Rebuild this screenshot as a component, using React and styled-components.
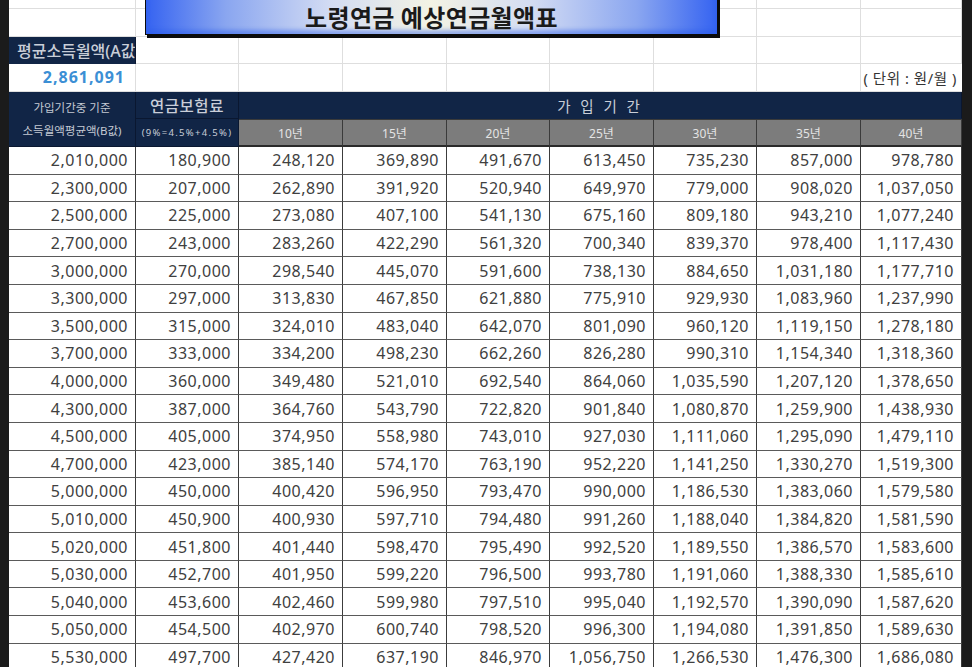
import React from "react";
import styled, { createGlobalStyle } from "styled-components";

const Global = createGlobalStyle`
  html, body { margin: 0; padding: 0; background: #1b1b1b; overflow: hidden; }
  #root { width: 972px; height: 667px; }
`;

const NAVY = "#112546";
const FONT = `"Noto Sans", "Noto Sans CJK KR", sans-serif`;

const Frame = styled.div`
  display: flex;
  width: 972px;
  height: 667px;
  overflow: hidden;
  background: #1b1b1b;
  font-family: ${FONT};
`;

const Strip = styled.div`
  flex: 0 0 ${(p) => p.$w}px;
  background: #1b1b1b;
`;

const Sheet = styled.div`
  position: relative;
  flex: 0 0 953px;
  display: grid;
  grid-template-columns: 127px 103px 104px 104px 103px 104px 103px 104px 101px;
  grid-template-rows: 9px repeat(24, 27.6px);
  background: #fff;
  align-content: start;
`;

const Blank = styled.div`
  box-sizing: border-box;
  border-right: 1px solid #dedede;
  border-bottom: 1px solid #dedede;
  background: #fff;
`;

const Navy = styled.div`
  box-sizing: border-box;
  background: ${NAVY};
  color: #c9ced8;
  display: flex;
  align-items: center;
  justify-content: ${(p) => p.$align || "center"};
  border-right: 1px solid #0a1730;
  border-bottom: 1px solid ${(p) => (p.$bottom ? "#0a1730" : NAVY)};
  grid-column: ${(p) => p.$col || "auto"};
  grid-row: ${(p) => p.$row || "auto"};
  overflow: hidden;
  white-space: nowrap;
  font-size: ${(p) => p.$size || 14}px;
  font-weight: ${(p) => p.$weight || 400};
  letter-spacing: ${(p) => p.$ls || 0}px;
  padding: ${(p) => p.$pad || "0"};
`;

const StackLabel = styled.div`
  display: flex;
  flex-direction: column;
  align-items: center;
  line-height: 23px;
  font-size: 11.5px;
  color: #c4c9d3;
`;

const AValue = styled.div`
  box-sizing: border-box;
  border-right: 1px solid #dedede;
  border-bottom: 1px solid #dedede;
  display: flex;
  align-items: center;
  justify-content: flex-end;
  padding-right: 10px;
  color: #3b8fd5;
  font-weight: 700;
  font-size: 16px;
  letter-spacing: 1px;
`;

const Unit = styled.div`
  box-sizing: border-box;
  border-bottom: 1px solid #dedede;
  display: flex;
  align-items: center;
  justify-content: flex-end;
  padding-right: 5px;
  color: #333;
  font-size: 14.5px;
  letter-spacing: 0.6px;
  white-space: nowrap;
`;

const Year = styled.div`
  box-sizing: border-box;
  background: #7c7c7c;
  color: #e4e4e4;
  font-size: 12px;
  display: flex;
  align-items: center;
  justify-content: center;
  border-top: 1px solid #3a3a3a;
  border-right: 1.5px solid #3a3a3a;
  border-bottom: 2px solid #2a2a2a;
`;

const Data = styled.div`
  box-sizing: border-box;
  display: flex;
  align-items: center;
  justify-content: flex-end;
  padding-right: 7px;
  color: #404040;
  font-size: 16px;
  letter-spacing: 0.5px;
  border-right: 1.5px solid #3c3c3c;
  border-bottom: 1px solid #5a5a5a;
  background: #fff;
`;

const Title = styled.div`
  position: absolute;
  left: 136px;
  top: -10px;
  width: 573px;
  height: 45px;
  box-sizing: border-box;
  border: 1px solid #0b0b0b;
  box-shadow: 2px 3px 0 #0b0b0b, inset 0 -4px 4px rgba(40, 90, 230, 0.45);
  background: linear-gradient(
    90deg,
    #3563f1 0%,
    #8aa6f0 14%,
    #d2dbf3 32%,
    #f3f3e4 50%,
    #d2dbf3 68%,
    #8aa6f0 86%,
    #3563f1 100%
  );
  display: flex;
  align-items: center;
  justify-content: center;
  padding-top: 8px;
  font-family: "Noto Sans CJK KR", sans-serif;
  font-size: 24px;
  font-weight: 700;
  color: #1a1a1a;
  letter-spacing: 0.4px;
`;

const years = ["10년", "15년", "20년", "25년", "30년", "35년", "40년"];

const rows = [
  ["2,010,000", "180,900", "248,120", "369,890", "491,670", "613,450", "735,230", "857,000", "978,780"],
  ["2,300,000", "207,000", "262,890", "391,920", "520,940", "649,970", "779,000", "908,020", "1,037,050"],
  ["2,500,000", "225,000", "273,080", "407,100", "541,130", "675,160", "809,180", "943,210", "1,077,240"],
  ["2,700,000", "243,000", "283,260", "422,290", "561,320", "700,340", "839,370", "978,400", "1,117,430"],
  ["3,000,000", "270,000", "298,540", "445,070", "591,600", "738,130", "884,650", "1,031,180", "1,177,710"],
  ["3,300,000", "297,000", "313,830", "467,850", "621,880", "775,910", "929,930", "1,083,960", "1,237,990"],
  ["3,500,000", "315,000", "324,010", "483,040", "642,070", "801,090", "960,120", "1,119,150", "1,278,180"],
  ["3,700,000", "333,000", "334,200", "498,230", "662,260", "826,280", "990,310", "1,154,340", "1,318,360"],
  ["4,000,000", "360,000", "349,480", "521,010", "692,540", "864,060", "1,035,590", "1,207,120", "1,378,650"],
  ["4,300,000", "387,000", "364,760", "543,790", "722,820", "901,840", "1,080,870", "1,259,900", "1,438,930"],
  ["4,500,000", "405,000", "374,950", "558,980", "743,010", "927,030", "1,111,060", "1,295,090", "1,479,110"],
  ["4,700,000", "423,000", "385,140", "574,170", "763,190", "952,220", "1,141,250", "1,330,270", "1,519,300"],
  ["5,000,000", "450,000", "400,420", "596,950", "793,470", "990,000", "1,186,530", "1,383,060", "1,579,580"],
  ["5,010,000", "450,900", "400,930", "597,710", "794,480", "991,260", "1,188,040", "1,384,820", "1,581,590"],
  ["5,020,000", "451,800", "401,440", "598,470", "795,490", "992,520", "1,189,550", "1,386,570", "1,583,600"],
  ["5,030,000", "452,700", "401,950", "599,220", "796,500", "993,780", "1,191,060", "1,388,330", "1,585,610"],
  ["5,040,000", "453,600", "402,460", "599,980", "797,510", "995,040", "1,192,570", "1,390,090", "1,587,620"],
  ["5,050,000", "454,500", "402,970", "600,740", "798,520", "996,300", "1,194,080", "1,391,850", "1,589,630"],
  ["5,530,000", "497,700", "427,420", "637,190", "846,970", "1,056,750", "1,266,530", "1,476,300", "1,686,080"],
];

const blanks = (n, key) => Array.from({ length: n }, (_, i) => <Blank key={`${key}-${i}`} />);

export default function App() {
  return (
    <>
      <Global />
      <Frame>
        <Strip $w={9} />
        <Sheet>
          {blanks(9, "r0")}
          {blanks(9, "r1")}
          <Navy $align="flex-start" $pad="0 0 0 8px" $size={16} $weight={500}>
            평균소득월액(A값)
          </Navy>
          {blanks(8, "r2")}
          <AValue>2,861,091</AValue>
          {blanks(7, "r3")}
          <Unit>( 단위 : 원/월 )</Unit>

          <Navy $row="span 2" $bottom>
            <StackLabel>
              <span>가입기간중 기준</span>
              <span>소득월액평균액(B값)</span>
            </StackLabel>
          </Navy>
          <Navy $size={15.5} $weight={500} $ls={0.5} $bottom>
            연금보험료
          </Navy>
          <Navy $col="span 7" $size={14.5} $ls={3}>
            가 입 기 간
          </Navy>
          <Navy $size={9.5} $ls={1.3} $bottom>
            (9%=4.5%+4.5%)
          </Navy>
          {years.map((y) => (
            <Year key={y}>{y}</Year>
          ))}

          {rows.map((r, i) =>
            r.map((v, j) => <Data key={`${i}-${j}`}>{v}</Data>)
          )}

          <Title>노령연금 예상연금월액표</Title>
        </Sheet>
        <Strip $w={10} />
      </Frame>
    </>
  );
}
